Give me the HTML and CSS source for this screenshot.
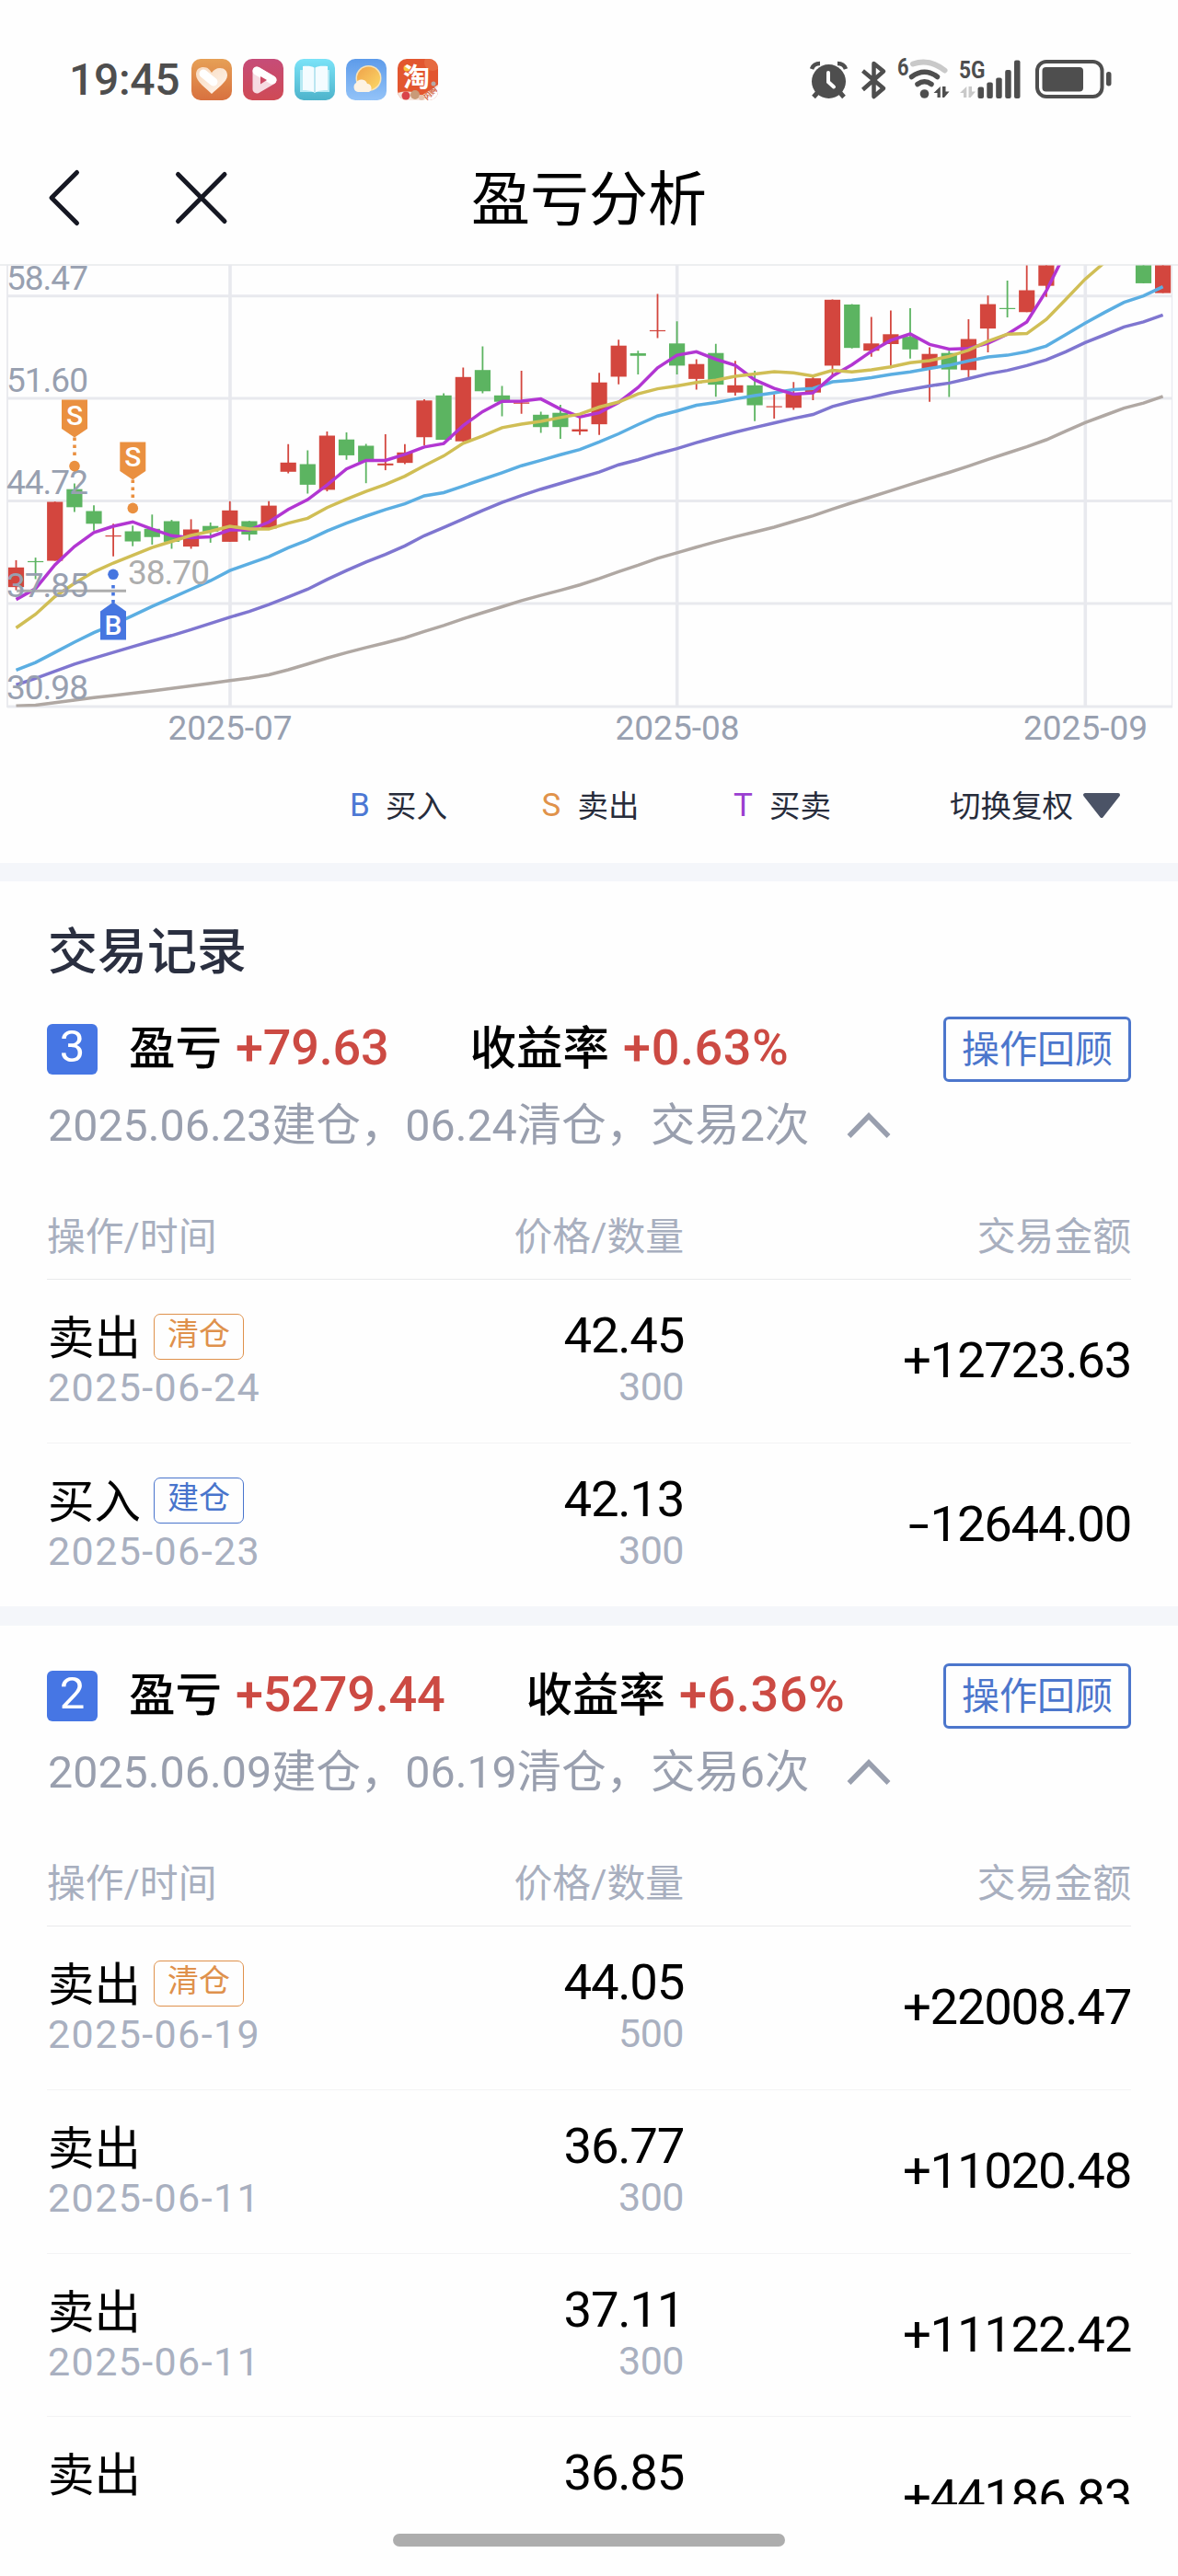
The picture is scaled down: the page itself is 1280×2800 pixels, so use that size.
FILE: index.html
```html
<!DOCTYPE html>
<html lang="zh-CN">
<head>
<meta charset="utf-8">
<title>盈亏分析</title>
<link rel="stylesheet" href="styles.css">
</head>
<body>
<div class="screen">
  <header class="status">
    <span class="clock">19:45</span>
    <div class="apps">
      <svg class="app" viewBox="0 0 44 45">
        <defs>
          <linearGradient id="gOrange" x1="0" y1="0" x2="0" y2="1"><stop offset="0" stop-color="#e6a056"/><stop offset="1" stop-color="#d8713f"/></linearGradient>
          <linearGradient id="gHeart" x1="0" y1="0" x2="1" y2="1"><stop offset="0" stop-color="#f8d9bd"/><stop offset="1" stop-color="#fff6ee"/></linearGradient>
        </defs>
        <rect width="44" height="45" rx="10" fill="url(#gOrange)"/>
        <path d="M22 38C16 32 5 25 5 17C5 11 9 9 13 9C18 9 20 12 22 15C24 12 27 10 31 10C36 10 39 13 39 18C39 25 27 33 22 38Z" fill="url(#gHeart)"/>
        <path d="M13 16L24 25" stroke="#fff" stroke-width="9" stroke-linecap="round"/>
      </svg>
      <svg class="app" viewBox="0 0 44 45">
        <defs><linearGradient id="gPink" x1="0" y1="0" x2="0" y2="1"><stop offset="0" stop-color="#c64c78"/><stop offset="1" stop-color="#cf4a55"/></linearGradient></defs>
        <rect width="44" height="45" rx="10" fill="url(#gPink)"/>
        <path d="M15 13L32 23L15 33Z" fill="none" stroke="#f6dbe2" stroke-width="9" stroke-linejoin="round"/>
        <path d="M15 13L32 23" stroke="#fff" stroke-width="9" stroke-linecap="round"/>
        <path d="M19 19L26 23L19 27.500Z" fill="#cd4a64"/>
      </svg>
      <svg class="app" viewBox="0 0 44 45">
        <defs><linearGradient id="gCyan" x1="0" y1="0" x2="0" y2="1"><stop offset="0" stop-color="#7be3f8"/><stop offset="1" stop-color="#4db3cb"/></linearGradient></defs>
        <rect width="44" height="45" rx="10" fill="url(#gCyan)"/>
        <path d="M6 12H38V36H6Z" fill="#b6e9f3"/>
        <path d="M22 10C18 7 12 8 9 8V34C13 34 18 34 22 37C26 34 31 34 36 34V8C32 8 26 7 22 10Z" fill="#f4fcff"/>
        <path d="M22 10V37" stroke="#a9dfec" stroke-width="1.500"/>
      </svg>
      <svg class="app" viewBox="0 0 44 45">
        <defs>
          <linearGradient id="gSky" x1="0" y1="0" x2="0" y2="1"><stop offset="0" stop-color="#5d9bea"/><stop offset="1" stop-color="#93c3f8"/></linearGradient>
          <linearGradient id="gSun" x1="0" y1="0" x2="1" y2="1"><stop offset="0" stop-color="#efa24a"/><stop offset="1" stop-color="#fbd867"/></linearGradient>
        </defs>
        <rect width="44" height="45" rx="10" fill="url(#gSky)"/>
        <circle cx="24.500" cy="21" r="14" fill="#f6e3b8"/>
        <circle cx="24.500" cy="21" r="12.500" fill="url(#gSun)"/>
        <path d="M13 36A5.500 5.500 0 0 1 11 26A6.500 6.500 0 0 1 23 27A4.800 4.800 0 0 1 25 36Z" fill="#fdf3e4"/>
      </svg>
      <svg class="app" viewBox="0 0 44 45">
        <clipPath id="cTao"><rect width="44" height="45" rx="10"/></clipPath>
        <g clip-path="url(#cTao)">
          <rect width="44" height="45" fill="#e2562f"/>
          <circle cx="38" cy="4" r="9" fill="#e66a40"/>
          <path d="M0 37Q14 33 26 40L44 28V45H0Z" fill="#f5e4dc"/>
          <circle cx="9" cy="40" r="4.500" fill="#d9434a"/>
          <circle cx="19" cy="39" r="5" fill="#c99a78"/>
          <circle cx="26" cy="42" r="3" fill="#e6c2ae"/>
          <path d="M29 45L44 30V45Z" fill="#fff"/>
          <circle cx="39" cy="27" r="2.500" fill="#b4a9a6"/>
          <circle cx="10" cy="10" r="3.500" fill="#f8c63c"/>
        </g>
        <text x="6" y="31" class="tao">淘</text>
        <text x="32" y="45" class="flash" transform="rotate(-44 32 45)">闪购</text>
      </svg>
    </div>
    <svg class="signals" viewBox="878 60 334 50" fill="#4e4e4e">
      <ellipse cx="900.500" cy="88.500" rx="18.500" ry="18.500"/>
      <path d="M882 75Q884 69 891 69M919 75Q917 69 910 69" fill="none" stroke="#4e4e4e" stroke-width="4.500"/>
      <path d="M888 101L884 105.500M913 101L917 105.500" stroke="#4e4e4e" stroke-width="5"/>
      <path d="M900 79V89L906 94.500" fill="none" stroke="#fff" stroke-width="4" stroke-linecap="round"/>
      <path d="M937.500 77L960 96L949.500 105V69L960 77.500L937.500 97.500" fill="none" stroke="#4e4e4e" stroke-width="4.500" stroke-linejoin="round"/>
      <text x="975" y="82" class="gen" textLength="12.500" lengthAdjust="spacingAndGlyphs">6</text>
      <circle cx="1004.500" cy="102" r="4.800"/>
      <path d="M997 91.500Q1004.500 86 1012 91.500" fill="none" stroke="#4e4e4e" stroke-width="5.500" stroke-linecap="round"/>
      <path d="M990.500 83.500Q1004.500 73 1018.500 83.500" fill="none" stroke="#4e4e4e" stroke-width="5.500" stroke-linecap="round"/>
      <path d="M992 69.500Q1010 63.500 1026.500 76.500" fill="none" stroke="#c9c9c9" stroke-width="6" stroke-linecap="round"/>
      <path d="M1021.800 94V106H1018.500V101H1014.500ZM1024 94H1027.500V99.500H1031.500L1026 106H1024Z"/>
      <text x="1042" y="85" class="gen" textLength="28.500" lengthAdjust="spacingAndGlyphs">5G</text>
      <path d="M1050.300 94V106H1047V101H1043ZM1052.500 94H1056V99.500H1060L1054.500 106H1052.500Z" fill="#c9c9c9"/>
      <rect x="1062.500" y="94.500" width="6.500" height="12.500" rx="2"/>
      <rect x="1072.300" y="89.500" width="6.500" height="17.500" rx="2"/>
      <rect x="1082.200" y="84.500" width="6.500" height="22.500" rx="2"/>
      <rect x="1092.200" y="76" width="6.500" height="31" rx="2"/>
      <rect x="1102" y="65.500" width="6.500" height="41.500" rx="2"/>
      <rect x="1127" y="67" width="70.500" height="38" rx="10" fill="none" stroke="#4e4e4e" stroke-width="4"/>
      <rect x="1132.500" y="73" width="44.500" height="26.500" rx="4"/>
      <rect x="1202" y="78" width="5.500" height="15.500" rx="2.700"/>
    </svg>
  </header>

  <nav class="nav">
    <svg class="nav-icons" viewBox="0 180 300 70" fill="none" stroke="#161823" stroke-width="5" stroke-linecap="round" stroke-linejoin="round">
      <path d="M83.500 187.500L56 215L83.500 242.500"/>
      <path d="M193.500 189.500L244 240.500M244 189.500L193.500 240.500"/>
    </svg>
    <h1 class="nav-title">盈亏分析</h1>
  </nav>

  <svg class="chart" id="chart" viewBox="0 287 1280 533"></svg>

  <div class="legend">
    <span class="legend-item"><b class="mark buy">B</b><span class="name">买入</span></span>
    <span class="legend-item"><b class="mark sell">S</b><span class="name">卖出</span></span>
    <span class="legend-item"><b class="mark both">T</b><span class="name">买卖</span></span>
    <span class="legend-switch"><span class="name">切换复权</span><svg class="tri" viewBox="0 0 44 28"><path d="M4 2H40L22 25Z" fill="#4b5366" stroke="#4b5366" stroke-width="4" stroke-linejoin="round"/></svg></span>
  </div>

  <main class="records">
    <div class="band first"></div>
    <h2 class="records-title">交易记录</h2>

    <section class="group">
      <div class="summary">
        <span class="badge">3</span>
        <span class="label">盈亏</span><span class="gain">+79.63</span>
        <span class="label rate">收益率</span><span class="gain percent">+0.63%</span>
        <button class="review">操作回顾</button>
      </div>
      <div class="period">2025.06.23建仓，06.24清仓，交易2次<svg class="chev" viewBox="0 0 48 30"><path d="M2.500 26L24 4L45.500 26"/></svg></div>
      <div class="cols"><span>操作/时间</span><span>价格/数量</span><span>交易金额</span></div>
      <div class="row">
        <div><div class="main"><span class="name">卖出</span><span class="tag out">清仓</span></div><div class="minor">2025-06-24</div></div>
        <div><div class="num">42.45</div><div class="minor qty">300</div></div>
        <div class="amount">+12723.63</div>
      </div>
      <div class="row">
        <div><div class="main"><span class="name">买入</span><span class="tag in">建仓</span></div><div class="minor">2025-06-23</div></div>
        <div><div class="num">42.13</div><div class="minor qty">300</div></div>
        <div class="amount"><span class="minus">-</span>12644.00</div>
      </div>
    </section>

    <div class="band"></div>

    <section class="group">
      <div class="summary">
        <span class="badge">2</span>
        <span class="label">盈亏</span><span class="gain">+5279.44</span>
        <span class="label rate">收益率</span><span class="gain percent">+6.36%</span>
        <button class="review">操作回顾</button>
      </div>
      <div class="period">2025.06.09建仓，06.19清仓，交易6次<svg class="chev" viewBox="0 0 48 30"><path d="M2.500 26L24 4L45.500 26"/></svg></div>
      <div class="cols"><span>操作/时间</span><span>价格/数量</span><span>交易金额</span></div>
      <div class="row">
        <div><div class="main"><span class="name">卖出</span><span class="tag out">清仓</span></div><div class="minor">2025-06-19</div></div>
        <div><div class="num">44.05</div><div class="minor qty">500</div></div>
        <div class="amount">+22008.47</div>
      </div>
      <div class="row">
        <div><div class="main"><span class="name">卖出</span></div><div class="minor">2025-06-11</div></div>
        <div><div class="num">36.77</div><div class="minor qty">300</div></div>
        <div class="amount">+11020.48</div>
      </div>
      <div class="row">
        <div><div class="main"><span class="name">卖出</span></div><div class="minor">2025-06-11</div></div>
        <div><div class="num">37.11</div><div class="minor qty">300</div></div>
        <div class="amount">+11122.42</div>
      </div>
      <div class="row">
        <div><div class="main"><span class="name">卖出</span></div></div>
        <div><div class="num">36.85</div></div>
        <div class="amount">+44186.83</div>
      </div>
    </section>
  </main>

  <footer class="home"><div class="home-bar"></div></footer>
</div>
<script src="chart.js"></script>
</body>
</html>
```

FILE: styles.css
```css
* { box-sizing: border-box; }
body {
  margin: 0;
  background: #fefefe;
  font-family: Roboto, "Noto Sans CJK SC", sans-serif;
  color: #000;
}
.screen { width: 1280px; height: 2800px; overflow: hidden; display: flex; flex-direction: column; }

.status { height: 144px; flex: none; display: flex; padding: 60px 68px 0 75px; }
.clock { width: 133px; font-size: 48px; font-weight: 500; line-height: 54px; color: #4e4e4e; letter-spacing: -.3px; }
.apps { display: flex; gap: 12px; padding-top: 4px; }
.app { width: 44px; height: 45px; display: block; overflow: visible; }
.signals { width: 334px; height: 50px; margin-left: auto; overflow: visible; }
.tao { font-size: 29px; font-weight: 700; fill: #fff; }
.flash { font-size: 8px; font-weight: 700; fill: #d2603c; }
.gen { font-size: 26px; font-weight: 700; }

.nav { height: 143px; flex: none; position: relative; display: flex; align-items: center; justify-content: center; }
.nav-icons { position: absolute; left: 0; top: 36px; width: 300px; height: 70px; }
.nav-title { margin: 0; padding-top: 4px; font-size: 64px; font-weight: 400; line-height: 80px; }

.chart { display: block; width: 1280px; height: 533px; flex: none; overflow: visible; }
.axis { font-size: 37px; fill: #98a0b0; letter-spacing: -1px; }
.month { font-size: 37px; fill: #98a0b0; text-anchor: middle; }
.low { font-size: 37px; fill: #adadad; letter-spacing: -1px; }
.flag { font-size: 30px; font-weight: 500; fill: #fff; text-anchor: middle; }

.legend { height: 118px; flex: none; display: flex; align-items: center; padding: 0 61px 7px 380px; font-size: 33.5px; color: #272c3b; }
.legend .name { margin-top: -5px; }
.legend-item { width: 208.5px; display: flex; align-items: center; }
.mark { width: 39px; font-size: 35px; font-weight: 400; }
.buy { color: #4c78d4; }
.sell { color: #e0924a; }
.both { color: #9a3fd0; }
.legend-switch { margin-left: auto; display: flex; align-items: center; gap: 9px; }
.tri { width: 44px; height: 28px; }

.records { height: 1784px; flex: none; overflow: hidden; }
.band { height: 21px; background: #f4f6fa; }
.band.first { height: 20px; }
.records-title { margin: 0; padding: 48px 52px 0; height: 106px; font-size: 54px; font-weight: 500; line-height: 60px; color: #2a2f40; }
.group { padding: 41px 51px 0; }
.summary { height: 71px; display: flex; align-items: center; }
.badge { width: 55px; height: 55px; border-radius: 6px; background: #4676e4; color: #fff; font-size: 49px; line-height: 50px; text-align: center; }
.label { font-size: 50.5px; font-weight: 500; line-height: 60px; margin: -2px 15px 0 34px; }
.label.rate { margin-left: 88px; }
.gain { font-size: 54px; font-weight: 500; line-height: 60px; margin-top: -4px; color: #cc4a43; letter-spacing: -.2px; }
.gain.percent { letter-spacing: .6px; }
.review { margin-left: auto; width: 204px; height: 71px; padding: 0; border: 3px solid #4c76cc; border-radius: 6px; background: none; color: #4c76cc; font: inherit; font-size: 41px; line-height: 62px; }
.period { height: 92px; margin-bottom: 29px; line-height: 90px; font-size: 48.4px; color: #999fae; display: flex; align-items: center; padding: 3px 0 0 1px; }
.chev { width: 48px; height: 30px; margin-left: 41px; fill: none; stroke: #999fae; stroke-width: 5.500; }
.cols, .row { display: grid; grid-template-columns: 346px 346px 1fr; }
.cols { height: 94px; line-height: 95px; font-size: 41.8px; color: #a8afbf; border-bottom: 1px solid #e9eaec; }
.cols span:nth-child(n+2), .row > :nth-child(n+2) { text-align: right; }
.row { height: 177.7px; padding-top: 31px; border-bottom: 1px solid #f3f3f4; }
.row:last-child { border-bottom: 0; }
.main { height: 62px; display: flex; align-items: center; font-size: 50.5px; padding-left: 1px; }
.main .name { margin-top: -6px; }
.tag { width: 98px; height: 50px; margin-left: 14px; border: 1.500px solid; border-radius: 7px; font-size: 34px; line-height: 43px; text-align: center; }
.out { color: #df914c; }
.in { color: #4874cc; }
.minor { font-size: 43px; line-height: 48px; color: #a9b0c0; padding-left: 1px; letter-spacing: 1.400px; }
.minor.qty { letter-spacing: -.5px; padding-top: 1px; }
.num, .amount { font-size: 54.5px; line-height: 60px; letter-spacing: -1.300px; }
.num { line-height: 59px; }
.num + .minor { padding-top: 2px; }
.amount { padding-top: 26px; }
.minus { display: inline-block; transform: scaleX(1.5); transform-origin: right; margin-right: 3px; }

.home { padding-top: 32px; display: flex; justify-content: center; }
.home-bar { width: 426px; height: 14px; border-radius: 7px; background: #adadad; }
```

FILE: chart.js
```javascript
// Daily candles with five moving averages; values are depths below the plot origin.
const X0 = 17.5, STEP = 21.12, TOP = 280, UNIT = 1 / 2.904;
const x = i => +(X0 + i * STEP).toFixed(1);
const y = v => +(TOP + v * UNIT).toFixed(1);
const RED = '#d3463e', GREEN = '#5cb461';

// [index, colour, high, body top, body bottom, low]
const candles = [
  [0,'r',955,978,1040,1050],[1,'g',947,958,961,1015],[2,'r',770,771,957,957],[3,'g',713,731,788,803],
  [4,'g',782,800,840,862],[5,'r',840,877,880,943],[6,'g',846,864,896,911],[7,'g',811,856,882,906],
  [8,'g',828,832,897,919],[9,'r',826,858,912,919],[10,'g',836,847,865,900],[11,'r',769,798,897,897],
  [12,'g',831,832,874,893],[13,'r',769,783,855,855],[14,'r',589,647,676,681],[15,'g',608,652,717,745],
  [16,'r',549,562,733,738],[17,'g',552,574,624,638],[18,'g',588,594,645,712],[19,'r',558,650,656,671],
  [20,'r',589,615,648,652],[21,'r',447,451,567,592],[22,'g',428,435,575,575],[23,'r',347,377,580,580],
  [24,'g',280,355,422,428],[25,'g',405,435,455,501],[26,'r',357,457,461,493],[27,'g',486,496,535,553],
  [28,'g',465,490,535,572],[29,'r',503,542,549,560],[30,'r',364,394,526,560],[31,'r',259,278,376,400],
  [32,'g',294,302,310,369],[33,'r',115,229,232,254],[34,'g',201,271,341,369],[35,'r',321,336,383,417],
  [36,'g',272,301,401,439],[37,'r',326,403,426,436],[38,'g',357,403,466,516],[39,'r',432,469,472,508],
  [40,'r',393,430,474,481],[41,'r',375,381,426,450],[42,'r',132,133,341,375],[43,'g',147,148,285,287],
  [44,'r',187,271,294,313],[45,'r',167,242,273,349],[46,'g',160,250,290,319],[47,'r',283,304,350,455],
  [48,'g',294,301,353,440],[49,'r',195,257,355,380],[50,'r',120,147,224,299],[51,'g',73,159,162,189],
  [52,'r',20,103,172,172],[53,'r',20,20,89,124],[58,'g',20,20,81,81],[59,'r',20,20,112,112]
];

const averages = [
  ['#b0a8a3', [1415,1413,1405,1397,1389,1382,1375,1368,1360,1352,1344,1335,1327,1317,1301,1283,1264,1247,1231,1216,1200,1180,1161,1140,1121,1102,1083,1066,1050,1033,1013,991,971,949,932,914,897,881,866,851,833,815,794,774,755,736,716,697,678,658,637,617,597,575,548,521,498,475,459,438]],
  ['#7f76d0', [1349,1328,1306,1283,1264,1246,1228,1210,1193,1174,1155,1135,1117,1095,1071,1047,1016,988,961,937,910,878,852,825,798,773,751,731,713,695,677,654,638,619,603,584,567,551,536,522,508,495,470,454,441,427,416,405,396,382,367,356,341,323,297,268,244,219,203,181]],
  ['#5baee2', [1302,1278,1246,1214,1184,1158,1130,1101,1074,1047,1020,988,966,944,916,892,863,838,816,795,777,752,742,721,700,679,657,640,622,606,582,556,527,500,484,466,457,446,436,427,417,413,392,387,379,369,361,350,340,326,314,308,297,279,243,207,173,141,121,92]],
  ['#b236d2', [1079,1045,970,912,868,848,834,857,878,884,881,860,860,835,795,764,718,667,640,640,621,598,587,530,486,454,453,446,478,503,490,457,410,348,308,297,321,340,386,413,431,427,374,338,296,261,241,274,289,287,270,242,203,105,-18]],
  ['#d0be55', [1169,1126,1070,1028,992,964,940,915,896,877,864,848,857,857,838,823,789,763,738,716,690,657,626,586,563,537,526,517,505,494,472,456,430,414,405,394,387,375,367,360,364,374,356,361,354,345,332,325,312,292,264,242,240,195,132,68,15]]
];

const out = [];
const line = (x1, y1, x2, y2, c, w, extra = '') =>
  out.push(`<line x1="${x1}" y1="${y1}" x2="${x2}" y2="${y2}" stroke="${c}" stroke-width="${w}" ${extra}/>`);
const text = (cls, tx, ty, s) => out.push(`<text class="${cls}" x="${tx}" y="${ty}">${s}</text>`);

// grid
line(0, 288, 1280, 288, '#dcdfe3', 1);
[321.7, 433, 544.5, 656, 768].forEach(v => line(8, v, 1274, v, '#e8e9ee', 3));
[250, 735.7, 1179.3].forEach(v => line(v, 288, v, 768, '#e8e9ee', 3.6));
line(8, 288, 8, 769, '#e8e9ee', 1.8);
line(1273.5, 288, 1273.5, 769, '#e8e9ee', 1.2);

out.push('<clipPath id="plot"><rect x="0" y="288.500" width="1280" height="480"/></clipPath><g clip-path="url(#plot)">');
for (const [i, k, hi, top, bottom, lo] of candles) {
  const c = k === 'r' ? RED : GREEN;
  line(x(i), y(hi), x(i), y(lo), c, 1.8);
  out.push(`<rect x="${x(i) - 8.6}" y="${y(top)}" width="17.2" height="${Math.max(1.2, (bottom - top) * UNIT)}" fill="${c}"/>`);
}
for (const [c, vals] of averages) {
  out.push(`<polyline fill="none" stroke="${c}" stroke-width="3.5" points="${vals.map((v, i) => x(i) + ',' + y(v)).join(' ')}"/>`);
}
out.push('</g>');

// period low
line(18, 642.2, 137, 642.2, '#adadad', 3);
text('low', 139, 634.7, '38.70');

// axis labels
[['58.47', 314.8], ['51.60', 426], ['44.72', 536.6], ['37.85', 648.8], ['30.98', 759.7]].forEach(([s, v]) => text('axis', 7, v, s));
[['2025-07', 250], ['2025-08', 736], ['2025-09', 1179.5]].forEach(([s, v]) => text('month', v, 803.8, s));

// sell flags hang above their day, the buy flag stands below
[[81, 434.6], [144.3, 480.4]].forEach(([cx, t]) => {
  line(cx, t + 41, cx, t + 62, '#ea9040', 3.6, 'stroke-dasharray="3.500 4.500"');
  out.push(`<path d="M${cx - 14} ${t}h28v31.500l-14 9.500l-14 -9.500z" fill="#ea9040"/><circle cx="${cx}" cy="${t + 72}" r="5.800" fill="#ea9040"/>`);
  text('flag', cx, t + 27, 'S');
});
line(123, 636, 123, 656, '#4676e0', 3.6, 'stroke-dasharray="3.500 4.500"');
out.push('<path d="M109 664.500l14 -10l14 10v31h-28z" fill="#4676e0"/><circle cx="123" cy="624.300" r="5.800" fill="#4676e0"/>');
text('flag', 123, 690, 'B');

document.getElementById('chart').innerHTML = out.join('');
```
